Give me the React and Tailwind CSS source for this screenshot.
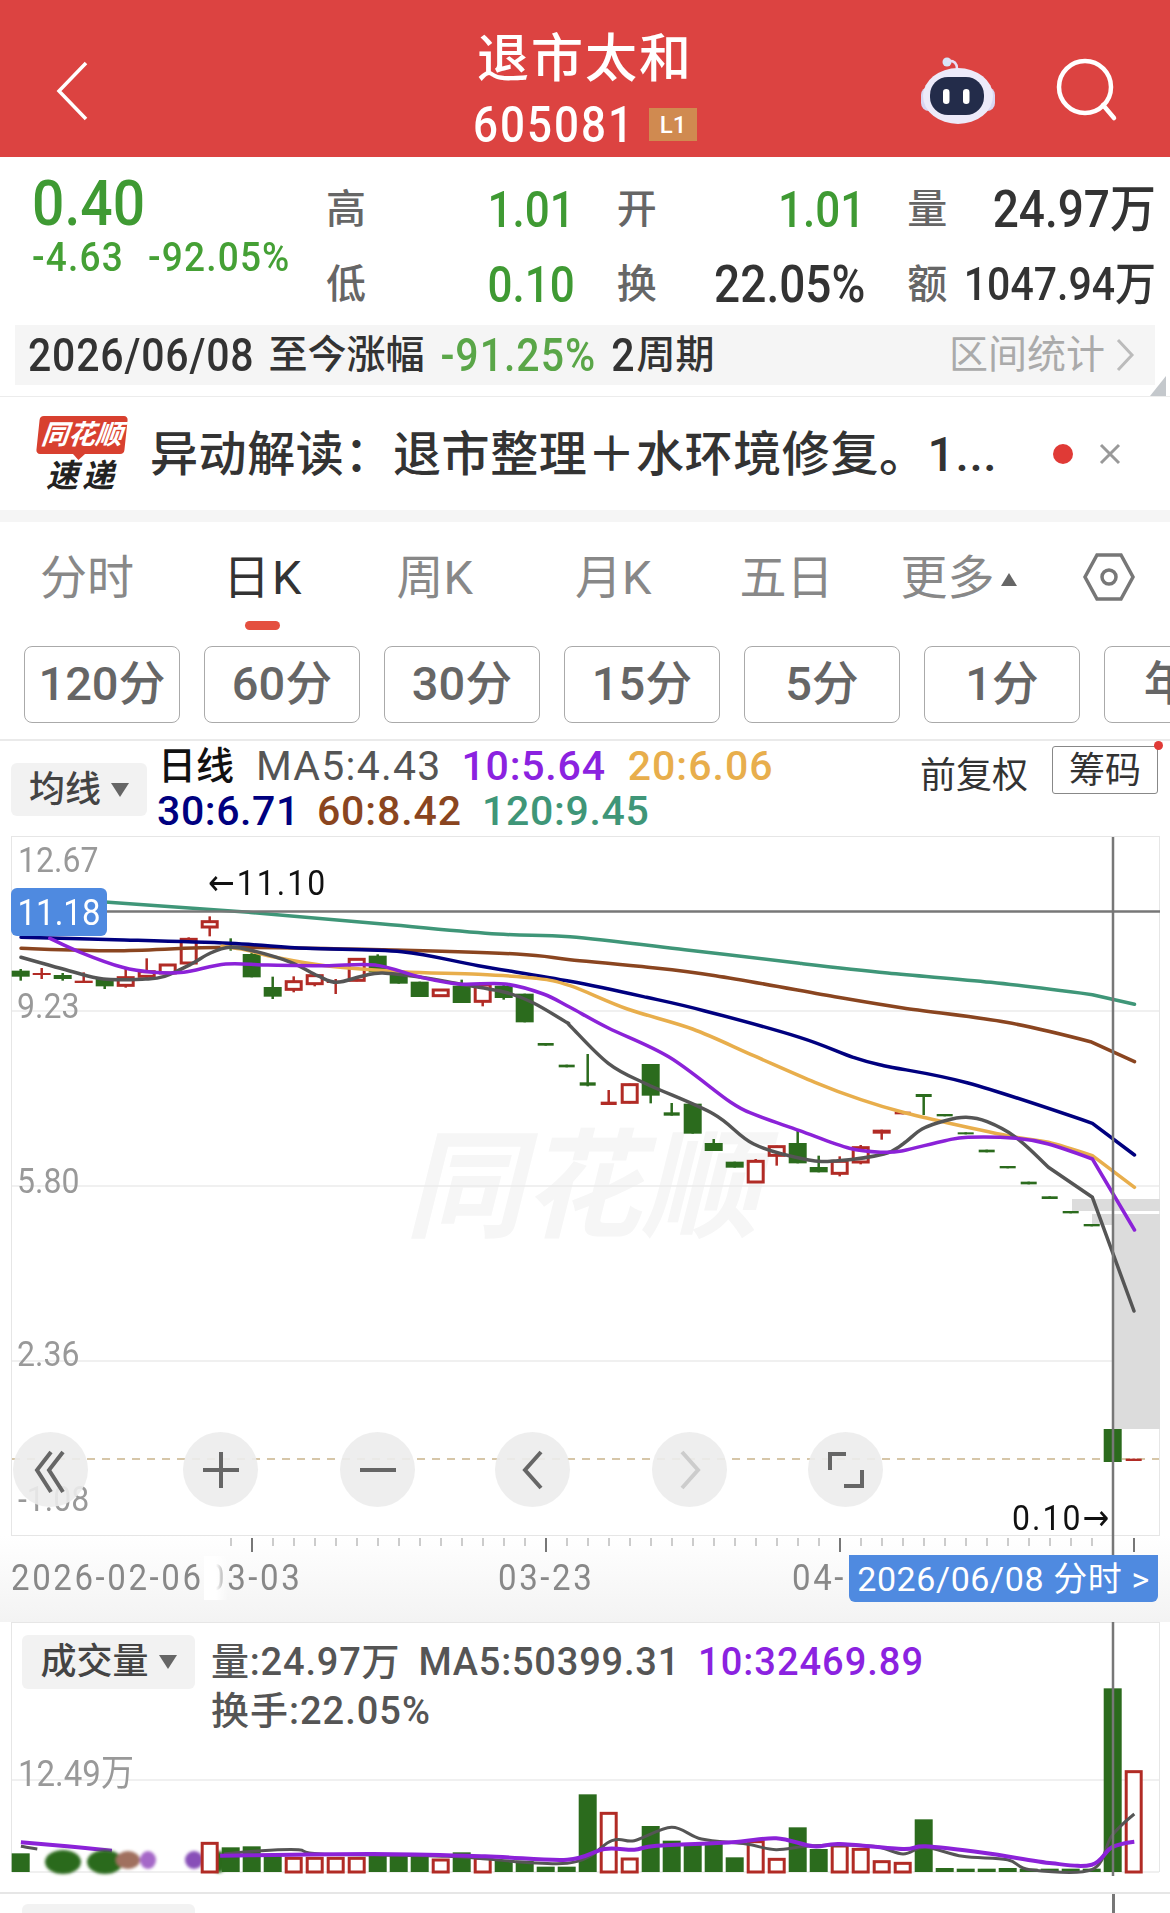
import React from "react";

const FONT = "font-['Roboto','Noto_Sans_CJK_SC',sans-serif]";
const GREEN = "#2b6b1d";
const RED = "#b12b25";

const candles = [
  ["g",425,443,420,455],["r",432,438,417,450],["g",438,450,432,455],["r",455,462,430,462],["g",450,472,450,480],
  ["h",443,472,420,476],["h",425,445,388,450],["h",405,435,405,440],["h",328,405,325,410],["h",275,297,262,322],
  ["g",350,360,328,365],["g",375,445,370,445],["g",474,503,443,510],["h",455,484,442,490],["h",437,467,437,472],
  ["r",455,462,450,495],["h",388,457,388,457],["g",380,430,376,430],["g",430,464,430,464],["g",458,504,458,504],
  ["h",480,503,480,503],["g",470,522,452,522],["h",465,520,460,532],["g",470,507,465,512],["g",494,580,494,580],
  ["g",642,650,642,650],["g",707,715,707,715],["g",760,770,675,772],["r",818,828,783,828],["h",764,823,764,823],
  ["g",705,800,705,823],["g",850,860,822,860],["g",824,914,824,914],["g",942,966,930,966],["g",998,1016,998,1016],
  ["h",994,1062,990,1062],["h",950,982,950,1010],["g",942,1003,900,1003],["g",1014,1030,980,1030],["h",994,1036,982,1042],
  ["h",953,1002,948,1006],["r",902,914,902,932],["r",848,856,848,856],["g",795,804,795,858],["g",855,862,855,862],
  ["g",910,916,910,916],["g",962,970,962,970],["g",1011,1018,1011,1018],["g",1058,1066,1058,1066],["g",1102,1110,1102,1110],
  ["g",1146,1153,1146,1153],["g",1185,1192,1185,1192],["g",1800,1899,1800,1899],["r",1889,1896,1889,1896],
];
const cx = (i) => 20.7 + 21 * i;
const cy = (v) => 830 + v / 3;

const z3 = (arr) => arr.map(([x, y]) => [x / 2.613, cy(y)]);
const z4 = (arr) => arr.map(([x, y]) => [570 + x / 2.613, cy(y)]);
const z6 = (arr) => arr.map(([x, y]) => [x / 1.34, 1600 + y / 3]);

// Catmull-Rom through the sampled points; the last segments stay straight, as the reference kinks there.
const smooth = (p, straightTail = 0) => {
  let d = `M${p[0][0].toFixed(1)} ${p[0][1].toFixed(1)}`;
  for (let i = 0; i < p.length - 1; i++) {
    const c = p[i + 1];
    if (i >= p.length - 1 - straightTail) {
      d += ` L${c[0].toFixed(1)} ${c[1].toFixed(1)}`;
      continue;
    }
    const a = p[Math.max(i - 1, 0)], b = p[i], e = p[Math.min(i + 2, p.length - 1)];
    const k = i === p.length - 2 - straightTail ? 0 : 1;
    const c1 = [b[0] + (c[0] - a[0]) / 6, b[1] + (c[1] - a[1]) / 6];
    const c2 = [c[0] - k * (e[0] - b[0]) / 6, c[1] - k * (e[1] - b[1]) / 6];
    d += ` C${c1[0].toFixed(1)} ${c1[1].toFixed(1)} ${c2[0].toFixed(1)} ${c2[1].toFixed(1)} ${c[0].toFixed(1)} ${c[1].toFixed(1)}`;
  }
  return d;
};

const lines = [
  { c: "#3f9678", t: 1, p: [[105, 903], ...z3([[650,250],[1000,285],[1300,315]]), ...z4([[0,323],[300,362],[600,403],[830,432],[1100,460],[1365,497],[1475,526]])] },
  { c: "#8a4520", t: 1, p: [...z3([[55,358],[300,365],[600,355],[1000,362],[1350,375]]), ...z4([[0,392],[180,412],[380,440],[700,505],[870,537],[1140,580],[1360,638],[1475,698]])] },
  { c: "#00007f", t: 1, p: [...z3([[55,325],[300,332],[600,343],[800,358],[1050,368],[1250,410]]), ...z4([[0,457],[200,505],[350,545],[600,625],[740,685],[820,710],[1040,762],[1365,883],[1475,978]])] },
  { c: "#e8ae4c", t: 1, p: [...z3([[580,352],[640,362],[720,385],[850,410],[1050,428],[1250,436],[1400,448]]), ...z4([[0,470],[150,540],[320,600],[480,680],[640,760],[760,812],[870,850],[1000,885],[1165,925],[1250,940],[1365,980],[1475,1075]])] },
  { c: "#555555", t: 2, p: [...z3([[55,385],[180,425],[270,450],[380,450],[430,442],[500,405],[550,372],[600,355],[660,365],[760,400],[830,440],[880,460],[950,440],[1000,432],[1100,445],[1200,465],[1320,490],[1390,520],[1480,580]]), ...z4([[0,590],[100,703],[200,765],[375,855],[480,945],[620,992],[700,995],[820,975],[870,945],[920,900],[980,875],[1035,865],[1090,878],[1165,925],[1250,1015],[1365,1105]]), [1134,1312]] },
  { c: "#8b22d8", t: 1, p: [...z3([[130,328],[210,370],[320,415],[400,430],[480,430],[590,405],[700,408],[850,410],[980,408],[1100,445],[1200,465],[1320,465],[1420,495]]), ...z4([[0,535],[100,597],[260,685],[420,820],[490,860],[600,905],[730,958],[820,970],[870,965],[980,935],[1040,925],[1165,928],[1250,945],[1365,990],[1475,1203]])] },
];

const vols = [
  [0,"g",763],[9,"h",730],[10,"g",745],[11,"g",742],[12,"g",765],[13,"h",775],[14,"h",775],[15,"h",775],[16,"h",775],
  [17,"g",770],[18,"g",770],[19,"g",770],[20,"h",780],[21,"g",760],[22,"h",775],[23,"g",785],[24,"g",785],[25,"g",803],
  [26,"g",803],[27,"g",586],[28,"h",640],[29,"h",777],[30,"g",681],[31,"g",725],[32,"g",735],[33,"g",735],[34,"g",775],
  [35,"h",725],[36,"h",778],[37,"g",685],[38,"g",750],[39,"h",738],[40,"h",748],[41,"h",785],[42,"h",790],[43,"g",661],
  [44,"g",807],[45,"g",809],[46,"g",809],[47,"g",807],[48,"g",809],[49,"g",809],[50,"g",809],[51,"g",809],[52,"g",268],[53,"h",515],
];
const volPurpleA = z6([[28,730],[90,742],[150,755]]);
const volGrayA = z6([[28,742],[50,750]]);
const volPurple = z6([[295,770],[500,765],[650,772],[760,782],[810,750],[850,752],[880,740],[980,730],[1040,718],[1090,742],[1125,735],[1210,750],[1240,742],[1320,762],[1410,793],[1463,797],[1490,745],[1520,728]]);
const volGray = z6([[300,765],[350,755],[400,752],[430,765],[600,772],[760,793],[820,725],[850,725],[900,685],[940,720],[1000,735],[1040,752],[1090,740],[1170,742],[1210,765],[1240,745],[1290,772],[1350,782],[1380,812],[1463,812],[1490,710],[1520,645]]);

const N = ({ className = "", children }) => (
  <span className={"inline-block scale-y-[1.12] whitespace-nowrap " + className}>{children}</span>
);

function Cell({ label, value, valueClass }) {
  return (
    <div className="flex items-center justify-between">
      <span className="text-[40px] leading-none text-[#666]">{label}</span>
      <N className={valueClass}>{value}</N>
    </div>
  );
}

const tabs = [
  { t: "分时", c: "ml-[40px] text-[#888]" },
  { t: "日K", c: "ml-[89px] tracking-[2px] text-[#333]" },
  { t: "周K", c: "ml-[93px] text-[#888]" },
  { t: "月K", c: "ml-[102px] text-[#888]" },
  { t: "五日", c: "ml-[88px] text-[#888]" },
  { t: "更多", c: "ml-[67px] text-[#888]" },
];
const periods = ["120分", "60分", "30分", "15分", "5分", "1分", "年K"];

function Chart() {
  return (
    <svg className="absolute left-0 top-0" width="1170" height="700" viewBox="0 837 1170 700" fill="none">
      {[1012, 1187, 1362].map((y) => (
        <line key={y} x1="12" x2="1159" y1={y} y2={y} stroke="#ebebeb" strokeWidth="1.5" />
      ))}
      <rect x="1072" y="1200" width="88" height="12" fill="#dcdcdc" />
      <rect x="1092" y="1215" width="68" height="11" fill="#dcdcdc" />
      <rect x="1114" y="1226" width="46" height="204" fill="#dcdcdc" />
      <line x1="12" x2="1159" y1="1460" y2="1460" stroke="#c9b48c" strokeWidth="1.5" strokeDasharray="8 7" />
      {candles.map(([t, a, b, wa, wb], i) => {
        const x = cx(i);
        const col = t === "g" ? GREEN : RED;
        const top = cy(a), bot = cy(b);
        return (
          <g key={i}>
            <line x1={x} x2={x} y1={cy(wa)} y2={cy(wb)} stroke={col} strokeWidth="2.5" />
            {t === "h" ? (
              <rect x={x - 7.5} y={top + 1} width="15" height={bot - top - 2} fill="#fff" stroke={col} strokeWidth="3" />
            ) : (
              <rect x={x - (b - a < 12 && i > 24 ? 8 : 9)} y={top} width={b - a < 12 && i > 24 ? 16 : 18} height={bot - top} fill={col} />
            )}
          </g>
        );
      })}
      {lines.map((l, i) => (
        <path key={i} d={smooth(l.p, l.t)} stroke={l.c} strokeWidth="3.5" strokeLinejoin="round" strokeLinecap="round" />
      ))}
      <line x1="12" x2="1160" y1="912.5" y2="912.5" stroke="#777" strokeWidth="2.5" />
      <line x1="1113" x2="1113" y1="838" y2="1537" stroke="#777" strokeWidth="2.5" />
    </svg>
  );
}

function Volume() {
  return (
    <svg className="absolute left-0 top-0" width="1170" height="270" viewBox="0 1623 1170 270" fill="none">
      <defs>
        <filter id="soft" x="-30%" y="-30%" width="160%" height="160%">
          <feGaussianBlur stdDeviation="1.5" />
        </filter>
      </defs>
      <line x1="12" x2="1159" y1="1781" y2="1781" stroke="#ebebeb" strokeWidth="1.5" />
      <line x1="12" x2="1159" y1="1873" y2="1873" stroke="#ebebeb" strokeWidth="1.5" />
      <path d={smooth(volGrayA)} stroke="#555" strokeWidth="3" />
      <path d={smooth(volPurpleA)} stroke="#8b22d8" strokeWidth="4" />
      <g filter="url(#soft)">
        <ellipse cx="63" cy="1863" rx="18" ry="12" fill="#2b6b1d" />
        <ellipse cx="105" cy="1863" rx="18" ry="12" fill="#2b6b1d" />
        <ellipse cx="128" cy="1861" rx="12" ry="9" fill="#a0705f" />
        <ellipse cx="148" cy="1861" rx="8" ry="9" fill="#a568c8" />
        <ellipse cx="194" cy="1861" rx="9" ry="9" fill="#8850b8" />
        <ellipse cx="219" cy="1863" rx="7" ry="11" fill="#2b6b1d" />
      </g>
      {vols.map(([i, t, v]) => {
        const x = cx(i);
        const y = 1600 + v / 3;
        return t === "g" ? (
          <rect key={i} x={x - 9} y={y} width="18" height={1873 - y} fill={GREEN} />
        ) : (
          <rect key={i} x={x - 7.5} y={y + 1} width="15" height={1873 - y - 1} fill="#fff" stroke={RED} strokeWidth="3" />
        );
      })}
      <path d={smooth(volGray)} stroke="#555" strokeWidth="3" strokeLinejoin="round" />
      <path d={smooth(volPurple)} stroke="#8b22d8" strokeWidth="4" strokeLinejoin="round" />
      <line x1="1113" x2="1113" y1="1623" y2="1877" stroke="#777" strokeWidth="2.5" />
    </svg>
  );
}

function RoundBtn({ className = "", children }) {
  return (
    <div className={"flex h-[75px] w-[75px] shrink-0 items-center justify-center rounded-full bg-[#ececec]/90 " + className}>
      <svg width="48" height="48" viewBox="0 0 48 48" fill="none" stroke="#666" strokeWidth="4">
        {children}
      </svg>
    </div>
  );
}

const Arrow = ({ children }) => <span className="font-['DejaVu_Sans']">{children}</span>;

export default function App() {
  return (
    <div className={"relative h-[1913px] w-[1170px] overflow-hidden bg-white font-medium " + FONT}>
      {/* Header */}
      <div className="grid h-[157px] grid-cols-[1fr_auto_1fr] items-center bg-[#dc4341]">
        <div className="pl-[54px]">
          <svg width="36" height="62" viewBox="0 0 36 62" fill="none" stroke="#fff" strokeWidth="3.5" className="mt-[24px]">
            <path d="M32 3 L5 31 L32 59" />
          </svg>
        </div>
        <div className="flex flex-col items-center pt-[18px]">
          <div className="text-[52px] leading-[62px] tracking-[2px] text-white">退市太和</div>
          <div className="mt-[12px] flex items-center gap-[14px]">
            <N className="text-[44px] leading-[44px] tracking-[2px] text-white">605081</N>
            <span className="flex h-[33px] w-[48px] items-center justify-center bg-[#d08a50] text-[24px] text-white">L1</span>
          </div>
        </div>
        <div className="mt-[24px] flex items-center justify-end gap-[60px] pr-[52px]">
          <svg width="76" height="68" viewBox="0 0 76 68" fill="none">
            <circle cx="27" cy="5" r="4.5" fill="#d7e5f8" />
            <path d="M27 4 C35 3 37 7 37 12" stroke="#e8dff5" strokeWidth="2.5" />
            <rect x="1" y="30" width="74" height="24" rx="8" fill="#d8d6f2" />
            <ellipse cx="38" cy="39" rx="35" ry="28" fill="#eceaf9" />
            <rect x="10" y="20" width="54" height="38" rx="18" fill="#232c4a" />
            <rect x="23" y="32" width="6.5" height="15" rx="3.2" fill="#fff" />
            <rect x="43" y="32" width="6.5" height="15" rx="3.2" fill="#fff" />
          </svg>
          <svg width="62" height="66" viewBox="0 0 62 66" fill="none" stroke="#fff" strokeWidth="4.5">
            <circle cx="29" cy="29" r="26" />
            <path d="M47 47 L58 60" strokeLinecap="round" />
          </svg>
        </div>
      </div>

      {/* Quote */}
      <div className="flex h-[168px]">
        <div className="w-[326px] pl-[32px] pt-[17px]">
          <N className="text-[57px] leading-[60px] text-[#3f9a33]">0.40</N>
          <div className="mt-[4px] flex gap-[24px]">
            <N className="text-[37px] leading-[40px] tracking-[1.2px] text-[#45a035]">-4.63</N>
            <N className="text-[37px] leading-[40px] tracking-[1.2px] text-[#45a035]">-92.05%</N>
          </div>
        </div>
        <div className="grid w-[830px] grid-cols-3 grid-rows-[75px_75px] gap-x-[42px] pt-[15px]">
          <Cell label="高" value="1.01" valueClass="text-[44px] text-[#3f9a33]" />
          <Cell label="开" value="1.01" valueClass="text-[44px] text-[#3f9a33]" />
          <Cell label="量" value="24.97万" valueClass="text-[46px] text-[#333]" />
          <Cell label="低" value="0.10" valueClass="text-[44px] text-[#3f9a33]" />
          <Cell label="换" value="22.05%" valueClass="text-[46px] text-[#333]" />
          <Cell label="额" value="1047.94万" valueClass="text-[41px] text-[#333]" />
        </div>
      </div>

      {/* Range bar */}
      <div className="relative h-[72px] border-b border-[#ececec]">
        <div className="mx-[15px] flex h-[60px] items-center bg-[#f5f5f5] pl-[13px] text-[39px] leading-none text-[#333]">
          <N className="text-[41px] tracking-[0.8px]">2026/06/08</N>
          <span className="ml-[14px]">至今涨幅</span>
          <N className="ml-[16px] text-[41px] tracking-[1px] text-[#5aa648]">-91.25%</N>
          <N className="ml-[15px] text-[41px]">2</N>
          <span className="ml-[2px]">周期</span>
          <span className="ml-auto font-normal text-[#aaa]">区间统计</span>
          <svg width="20" height="34" viewBox="0 0 20 34" fill="none" stroke="#bbb" strokeWidth="3" className="ml-[10px] mr-[20px]">
            <path d="M3 2 L17 17 L3 32" />
          </svg>
        </div>
        <svg width="16" height="20" viewBox="0 0 16 20" className="absolute bottom-0 right-[4px]" fill="#c4c8cc">
          <path d="M16 0 V20 H0 Z" />
        </svg>
      </div>

      {/* News */}
      <div className="flex h-[113px] items-center pl-[36px]">
        <div className="flex w-[92px] shrink-0 flex-col items-center">
          <div className="relative flex h-[38px] w-[88px] -skew-x-6 items-center justify-center rounded-[4px] bg-[#d8402f] text-[27px] font-bold italic text-white">
            <span className="whitespace-nowrap">同花顺</span>
            <div className="absolute bottom-[-6px] left-[36px] h-0 w-0 border-x-[7px] border-t-[7px] border-x-transparent border-t-[#d8402f]" />
          </div>
          <div className="mt-[6px] text-[32px] font-bold italic leading-[32px] tracking-[4px] text-[#222]">速递</div>
        </div>
        <div className="ml-[22px] whitespace-nowrap pt-[3px] text-[48px] leading-none tracking-[0.6px] text-[#333]">异动解读：退市整理＋水环境修复。1...</div>
        <div className="ml-auto mr-[25px] h-[20px] w-[20px] rounded-full bg-[#e03a36]" />
        <svg width="24" height="24" viewBox="0 0 24 24" fill="none" stroke="#999" strokeWidth="3" className="mr-[48px]">
          <path d="M3 3 L21 21 M21 3 L3 21" />
        </svg>
      </div>
      <div className="h-[12px] bg-[#f5f5f5]" />

      {/* Tabs */}
      <div className="relative flex h-[124px] items-start pt-[32px] font-normal">
        {tabs.map((t) => (
          <span key={t.t} className={"text-[47px] leading-[48px] " + t.c}>{t.t}</span>
        ))}
        <div className="ml-[6px] mt-[19px] h-0 w-0 border-x-[8px] border-b-[13px] border-x-transparent border-b-[#666]" />
        <svg width="52" height="50" viewBox="0 0 52 50" fill="none" stroke="#777" strokeWidth="3.5" className="ml-[66px] mt-[-2px]">
          <path d="M14 3 H38 L50 25 L38 47 H14 L2 25 Z" />
          <circle cx="26" cy="25" r="7" />
        </svg>
        <div className="absolute left-[245px] top-[99px] h-[9px] w-[35px] rounded-full bg-[#e4503f]" />
      </div>

      {/* Periods */}
      <div className="flex h-[77px] gap-[24px] overflow-hidden pl-[24px]">
        {periods.map((p) => (
          <div key={p} className="flex h-[77px] w-[156px] shrink-0 items-center justify-center whitespace-nowrap rounded-[8px] border-[1.5px] border-[#aaa] text-[47px] text-[#666]">
            {p}
          </div>
        ))}
      </div>
      <div className="mt-[16px] h-[2px] bg-[#eaeaea]" />

      {/* Chart header */}
      <div className="relative flex h-[95px]">
        <div className="ml-[11px] mt-[22px] flex h-[53px] w-[136px] items-center justify-center gap-[10px] rounded-[6px] bg-[#f2f2f2] text-[36px] text-[#444]">
          均线
          <div className="h-0 w-0 border-x-[9px] border-t-[14px] border-x-transparent border-t-[#666]" />
        </div>
        <div className="ml-[10px] flex flex-col">
          <div className="flex h-[48px] items-center pl-[1px] pt-[2px]">
            <span className="text-[38px] leading-none text-[#111]">日线</span>
            <span className="ml-[22px] text-[41px] font-normal leading-none tracking-[1.2px] text-[#555]">MA5:4.43</span>
            <span className="ml-[20px] text-[41px] leading-none tracking-[0.8px] text-[#8b22e0]">10:5.64</span>
            <span className="ml-[22px] text-[41px] leading-none tracking-[1px] text-[#e8ae4c]">20:6.06</span>
          </div>
          <div className="flex h-[44px] items-center">
            <span className="text-[41px] leading-none tracking-[0.6px] text-[#00007f]">30:6.71</span>
            <span className="ml-[17px] text-[41px] leading-none tracking-[0.9px] text-[#8a4520]">60:8.42</span>
            <span className="ml-[20px] text-[41px] leading-none tracking-[0.7px] text-[#3f9678]">120:9.45</span>
          </div>
        </div>
        <div className="absolute left-[920px] top-[14px] text-[36px] font-normal leading-[42px] text-[#333]">前复权</div>
        <div className="absolute left-[1052px] top-[5px] flex h-[48px] w-[106px] items-center justify-center rounded-[3px] border-[1.5px] border-[#888] pt-[2px] text-[36px] font-normal text-[#333]">筹码</div>
        <div className="absolute left-[1154px] top-[0px] h-[9px] w-[9px] rounded-full bg-[#e03a36]" />
      </div>

      {/* Main chart */}
      <div className="relative h-[700px] font-normal">
        <div className="absolute left-[405px] top-[292px] whitespace-nowrap text-[118px] font-bold italic leading-[120px] text-[#f6f6f6]">同花顺</div>
        <div className="absolute bottom-0 left-[11px] right-[10px] top-0 border-[1.5px] border-[#e6e6e6]" />
        <Chart />
        <N className="absolute left-[18px] top-[6px] text-[32px] leading-[36px] text-[#999]">12.67</N>
        <N className="absolute left-[17px] top-[152px] text-[32px] leading-[36px] text-[#999]">9.23</N>
        <N className="absolute left-[17px] top-[327px] text-[32px] leading-[36px] text-[#999]">5.80</N>
        <N className="absolute left-[17px] top-[500px] text-[32px] leading-[36px] text-[#999]">2.36</N>
        <N className="absolute left-[18px] top-[645px] text-[32px] leading-[36px] text-[#999]">-1.08</N>
        <div className="absolute left-[11px] top-[52px] flex h-[48px] w-[96px] items-center justify-center rounded-[6px] bg-[#4f8ae0]">
          <N className="text-[33px] leading-none text-white">11.18</N>
        </div>
        <N className="absolute left-[208px] top-[29px] text-[32px] leading-[36px] tracking-[2px] text-[#111]"><Arrow>←</Arrow>11.10</N>
        <N className="absolute left-[1012px] top-[664px] text-[32px] leading-[36px] tracking-[2px] text-[#111]">0.10<Arrow>→</Arrow></N>
        <div className="absolute left-[13px] top-[596px] flex">
          <RoundBtn>
            <path d="M24 6 L10 24 L24 46 M36 6 L22 24 L36 46" />
          </RoundBtn>
          <RoundBtn className="ml-[95px]">
            <path d="M6 24 H42 M24 6 V42" />
          </RoundBtn>
          <RoundBtn className="ml-[82px]">
            <path d="M6 24 H42" />
          </RoundBtn>
          <RoundBtn className="ml-[80px]">
            <path d="M32 6 L16 24 L32 42" />
          </RoundBtn>
          <RoundBtn className="ml-[82px] [&_svg]:stroke-[#ccc]">
            <path d="M16 6 L32 24 L16 42" />
          </RoundBtn>
          <RoundBtn className="ml-[81px]">
            <path d="M8 24 V8 H24 M40 24 V40 H22" />
          </RoundBtn>
        </div>
      </div>

      {/* Axis */}
      <div className="relative h-[86px] bg-gradient-to-b from-white to-[#f3f3f3] font-normal">
        <svg className="absolute left-0 top-0" width="1170" height="20" fill="none">
          {Array.from({ length: 44 }, (_, i) => {
            const x = 231 + 21 * i;
            const major = [1, 15, 29, 43].includes(i);
            return <line key={i} x1={x} x2={x} y1="2" y2={major ? 16 : 10} stroke={major ? "#777" : "#bbb"} strokeWidth={major ? 2 : 1.5} />;
          })}
          <line x1="1113" x2="1113" y1="0" y2="20" stroke="#777" strokeWidth="2.5" />
        </svg>
        <N className="absolute left-[11px] top-[24px] text-[33px] leading-[36px] tracking-[2.6px] text-[#888]">2026-02-06</N>
        <N className="absolute left-[206px] top-[24px] text-[33px] leading-[36px] tracking-[2.6px] text-[#888]">03-03</N>
        <div className="absolute left-[204px] top-[20px] h-[44px] w-[24px] bg-gradient-to-r from-white via-white to-transparent" />
        <N className="absolute left-[498px] top-[24px] text-[33px] leading-[36px] tracking-[2.6px] text-[#888]">03-23</N>
        <N className="absolute left-[792px] top-[24px] text-[33px] leading-[36px] tracking-[2.6px] text-[#888]">04-</N>
        <div className="absolute left-[849px] top-[19px] flex h-[47px] w-[309px] items-center justify-center rounded-b-[6px] bg-[#4f8ae0] text-[34px] leading-none text-white">
          <span className="whitespace-nowrap tracking-[0.6px]">2026/06/08 分时 &gt;</span>
        </div>
      </div>

      {/* Volume */}
      <div className="relative h-[270px]">
        <div className="absolute bottom-[20px] left-[11px] right-[10px] top-0 border-x-[1.5px] border-t-[1.5px] border-[#e6e6e6]" />
        <Volume />
        <div className="absolute left-[22px] top-[13px] flex h-[54px] w-[173px] items-center justify-center gap-[10px] rounded-[6px] bg-[#f2f2f2] text-[36px] text-[#444]">
          成交量
          <div className="h-0 w-0 border-x-[9px] border-t-[14px] border-x-transparent border-t-[#666]" />
        </div>
        <div className="absolute left-[211px] top-[19px] flex items-center whitespace-nowrap text-[38px] leading-[42px] text-[#555]">
          <span className="tracking-[0.8px]">量:24.97万</span>
          <span className="ml-[18px] tracking-[0.8px]">MA5:50399.31</span>
          <span className="ml-[18px] tracking-[1px] text-[#8b22e0]">10:32469.89</span>
        </div>
        <div className="absolute left-[211px] top-[68px] whitespace-nowrap text-[38px] leading-[42px] tracking-[1px] text-[#555]">换手:22.05%</div>
        <N className="absolute left-[18px] top-[132px] text-[33px] font-normal leading-[40px] text-[#999]">12.49万</N>
      </div>

      {/* Next panel */}
      <div className="relative h-[20px] border-t-2 border-[#e6e6e6]">
        <div className="absolute left-[22px] top-[10px] h-[40px] w-[173px] rounded-t-[6px] bg-[#f2f2f2]" />
        <div className="absolute left-[1112px] top-0 h-[20px] w-[2.5px] bg-[#777]" />
      </div>
    </div>
  );
}
